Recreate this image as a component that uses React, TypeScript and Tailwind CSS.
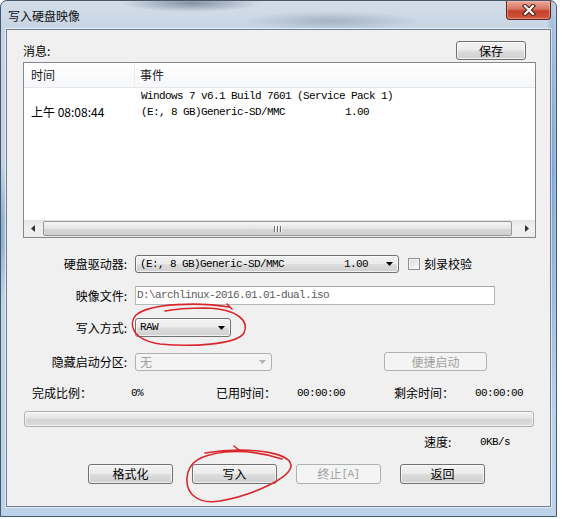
import React from "react";

const mono = "font-['Liberation_Mono','Noto_Sans_CJK_SC',monospace] text-[11px] tracking-[-0.6px]";
const btn =
  "flex items-center justify-center rounded-[3px] border border-[#707070] bg-[linear-gradient(to_bottom,#f2f2f2_0%,#ebebeb_48%,#dddddd_52%,#cfcfcf_100%)] shadow-[inset_0_0_0_1px_rgba(255,255,255,0.7)] text-black";
const btnDis =
  "flex items-center justify-center rounded-[3px] border border-[#adb2b5] bg-[#f4f4f4] text-[#a0a0a0]";

function Arrow({ color = "#000" }: { color?: string }) {
  return (
    <svg width="7" height="4" viewBox="0 0 7 4">
      <polygon points="0,0 7,0 3.5,4" fill={color} />
    </svg>
  );
}

function Close() {
  return (
    <div className="absolute top-0 right-[5px] w-[45px] h-[19px] rounded-b-[4px] border border-t-0 border-[#5c2319] bg-[linear-gradient(to_bottom,#eaa99a_0%,#d77561_45%,#c3412b_55%,#d0593e_100%)] shadow-[inset_0_0_0_1px_rgba(255,200,190,0.45)] flex items-center justify-center">
      <svg width="14" height="12" viewBox="0 0 14 12">
        <path d="M3 2 L11 10 M11 2 L3 10" stroke="#4a1a12" strokeWidth="4.2" strokeLinecap="square" />
        <path d="M3 2 L11 10 M11 2 L3 10" stroke="#ffffff" strokeWidth="2.2" strokeLinecap="square" />
      </svg>
    </div>
  );
}

function Label({ children }: { children: React.ReactNode }) {
  return <div className="w-[120px] text-right leading-[16px]">{children}</div>;
}

export default function App() {
  return (
    <div className="w-[562px] h-[519px] bg-white relative overflow-hidden font-['Noto_Sans_CJK_SC',sans-serif] text-[12px] text-black">
      <div className="w-[557px] h-[517px] rounded-t-[7px] border border-[#46566b] relative flex flex-col bg-[radial-gradient(70px_9px_at_190px_2px,rgba(70,85,105,0.55),transparent),radial-gradient(90px_10px_at_330px_20px,rgba(95,112,132,0.35),transparent),radial-gradient(5px_70px_at_1px_230px,rgba(60,110,170,0.45),transparent),radial-gradient(6px_260px_at_551px_170px,rgba(60,125,200,0.6),transparent),linear-gradient(to_bottom,#d3dde8,#c6d5e4_30px,#bcd2e8)]">
        <div className="h-[28px] flex items-center pl-[7px] pt-[1px] text-[12px] text-[#111]">写入硬盘映像</div>
        <Close />
        <div className="px-[5px]">
          <div className="w-[545px] h-[478px] border border-[#6c7f96] bg-[#f0f0f0] shadow-[0_0_0_1px_rgba(255,255,255,0.55)] flex flex-col">
            {/* row 1 */}
            <div className="mt-[11px] h-[19px] flex items-center justify-between pl-[16px] pr-[24px]">
              <div className="leading-[16px]">消息:</div>
              <div className={`${btn} w-[70px] h-[19px]`}>保存</div>
            </div>

            {/* list view */}
            <div className="ml-[16px] mt-[2px] w-[513px] h-[176px] border border-[#828790] bg-white flex flex-col">
              <div className="h-[25px] border-b border-[#e8e8e8] bg-[linear-gradient(to_bottom,#ffffff,#f6f7f9)] flex items-center pl-[7px] text-[#1a1a1a]">
                <div className="w-[104px] border-r border-[#ececec] h-full flex items-center">时间</div>
                <div className="pl-[5px]">事件</div>
              </div>
              <div className="flex-1">
                <div className="h-[16px] flex items-center pl-[7px]">
                  <div className="w-[110px]"></div>
                  <div className={`${mono} whitespace-pre`}>Windows 7 v6.1 Build 7601 (Service Pack 1)</div>
                </div>
                <div className="h-[16px] flex items-center pl-[7px]">
                  <div className="w-[110px] leading-[16px]">上午 08:08:44</div>
                  <div className={`${mono} whitespace-pre`}>{"(E:, 8 GB)Generic-SD/MMC          1.00"}</div>
                </div>
              </div>
              {/* scrollbar */}
              <div className="h-[17px] flex items-center bg-[linear-gradient(to_bottom,#e3e3e3,#f1f1f1_40%,#ececec)]">
                <div className="w-[17px] h-full flex items-center justify-center">
                  <svg width="4" height="7" viewBox="0 0 4 7"><polygon points="4,0 4,7 0,3.5" fill="#333" /></svg>
                </div>
                <div className="ml-[2px] w-[469px] h-[15px] rounded-[2px] border border-[#979797] bg-[linear-gradient(to_bottom,#f5f5f5,#e6e6e6_50%,#d6d6d6_55%,#d0d0d0)] flex items-center justify-center gap-[2px]">
                  <div className="w-[1px] h-[6px] bg-[#6a6a6a] shadow-[1px_0_0_#fff]"></div>
                  <div className="w-[1px] h-[6px] bg-[#6a6a6a] shadow-[1px_0_0_#fff]"></div>
                  <div className="w-[1px] h-[6px] bg-[#6a6a6a] shadow-[1px_0_0_#fff]"></div>
                </div>
                <div className="flex-1"></div>
                <div className="w-[17px] h-full flex items-center justify-center">
                  <svg width="4" height="7" viewBox="0 0 4 7"><polygon points="0,0 0,7 4,3.5" fill="#333" /></svg>
                </div>
              </div>
            </div>

            {/* drive */}
            <div className="mt-[17px] h-[18px] flex items-center">
              <Label>硬盘驱动器:</Label>
              <div className={`${btn} ml-[8px] w-[264px] h-[18px] !justify-start pl-[4px] pr-[5px]`}>
                <div className={`${mono} whitespace-pre flex-1`}>{"(E:, 8 GB)Generic-SD/MMC          1.00"}</div>
                <Arrow />
              </div>
              <div className="ml-[9px] w-[12px] h-[12px] border border-[#8e8f8f] bg-[linear-gradient(135deg,#d8d8d8,#fbfbfb)] shadow-[inset_0_0_0_1px_#f4f4f4]"></div>
              <div className="ml-[4px] leading-[16px]">刻录校验</div>
            </div>

            {/* path */}
            <div className="mt-[13px] h-[19px] flex items-center">
              <Label>映像文件:</Label>
              <div className="ml-[8px] w-[360px] h-[19px] border border-[#b5b8bd] border-t-[#a3a6ab] bg-white flex items-center pl-[1px]">
                <div className={`${mono} whitespace-pre text-[#5a5a5a]`}>{"D:\\archlinux-2016.01.01-dual.iso"}</div>
              </div>
            </div>

            {/* write mode */}
            <div className="mt-[13px] h-[19px] flex items-center">
              <Label>写入方式:</Label>
              <div className={`${btn} ml-[8px] w-[96px] h-[19px] !justify-start pl-[4px] pr-[5px]`}>
                <div className={`${mono} flex-1`}>RAW</div>
                <Arrow />
              </div>
            </div>

            {/* hidden partition */}
            <div className="mt-[15px] h-[19px] flex items-center">
              <Label>隐藏启动分区:</Label>
              <div className={`${btnDis} ml-[8px] w-[137px] h-[18px] !justify-start pl-[4px] pr-[5px]`}>
                <div className="flex-1 leading-[16px]">无</div>
                <Arrow color="#b4b4b4" />
              </div>
              <div className={`${btnDis} ml-[112px] w-[103px] h-[19px]`}>便捷启动</div>
            </div>

            {/* status */}
            <div className="mt-[14px] h-[16px] flex items-center pl-[25px] leading-[16px]">
              <div className="w-[99px]">完成比例：</div>
              <div className={`${mono} w-[85px]`}>0%</div>
              <div className="w-[81px]">已用时间：</div>
              <div className={`${mono} w-[97px]`}>00:00:00</div>
              <div className="w-[81px]">剩余时间：</div>
              <div className={mono}>00:00:00</div>
            </div>

            {/* progress */}
            <div className="mt-[10px] ml-[17px] w-[510px] h-[16px] rounded-[3px] border border-[#b0b0b0] bg-[linear-gradient(to_bottom,#f4f4f4,#e4e4e4_45%,#d4d4d4_55%,#dcdcdc)] shadow-[inset_0_0_0_1px_rgba(255,255,255,0.6)]"></div>

            {/* speed */}
            <div className="mt-[7px] h-[16px] flex items-center pl-[417px] leading-[16px]">
              <div className="w-[56px]">速度:</div>
              <div className={mono}>0KB/s</div>
            </div>

            {/* buttons */}
            <div className="mt-[14px] h-[20px] flex items-center pl-[81px] gap-[19px]">
              <div className={`${btn} w-[85px] h-[20px]`}>格式化</div>
              <div className={`${btn} w-[85px] h-[20px]`}>写入</div>
              <div className={`${btnDis} w-[85px] h-[20px]`}>
                终止<span className={mono}>[A]</span>
              </div>
              <div className={`${btn} w-[85px] h-[20px]`}>返回</div>
            </div>
          </div>
        </div>
      </div>

      {/* hand-drawn red marks */}
      <svg className="absolute inset-0 pointer-events-none" width="562" height="519" viewBox="0 0 562 519" fill="none">
        <path
          d="M227 304 L232 309 M229 307 C200 302, 150 303, 136 315 C128 324, 132 340, 160 344 C190 347, 236 345, 244 333 C249 322, 240 309, 205 308 C190 308, 175 309, 165 311"
          stroke="#d9262b"
          strokeWidth="1.6"
          strokeLinecap="round"
        />
        <path
          d="M234 446 L240 451 M205 453 C245 446, 290 452, 291 465 C292 478, 250 496, 220 501 C196 505, 186 492, 187 478 C188 462, 200 455, 225 452 C250 450, 270 455, 282 459"
          stroke="#d9262b"
          strokeWidth="1.6"
          strokeLinecap="round"
        />
      </svg>
    </div>
  );
}
